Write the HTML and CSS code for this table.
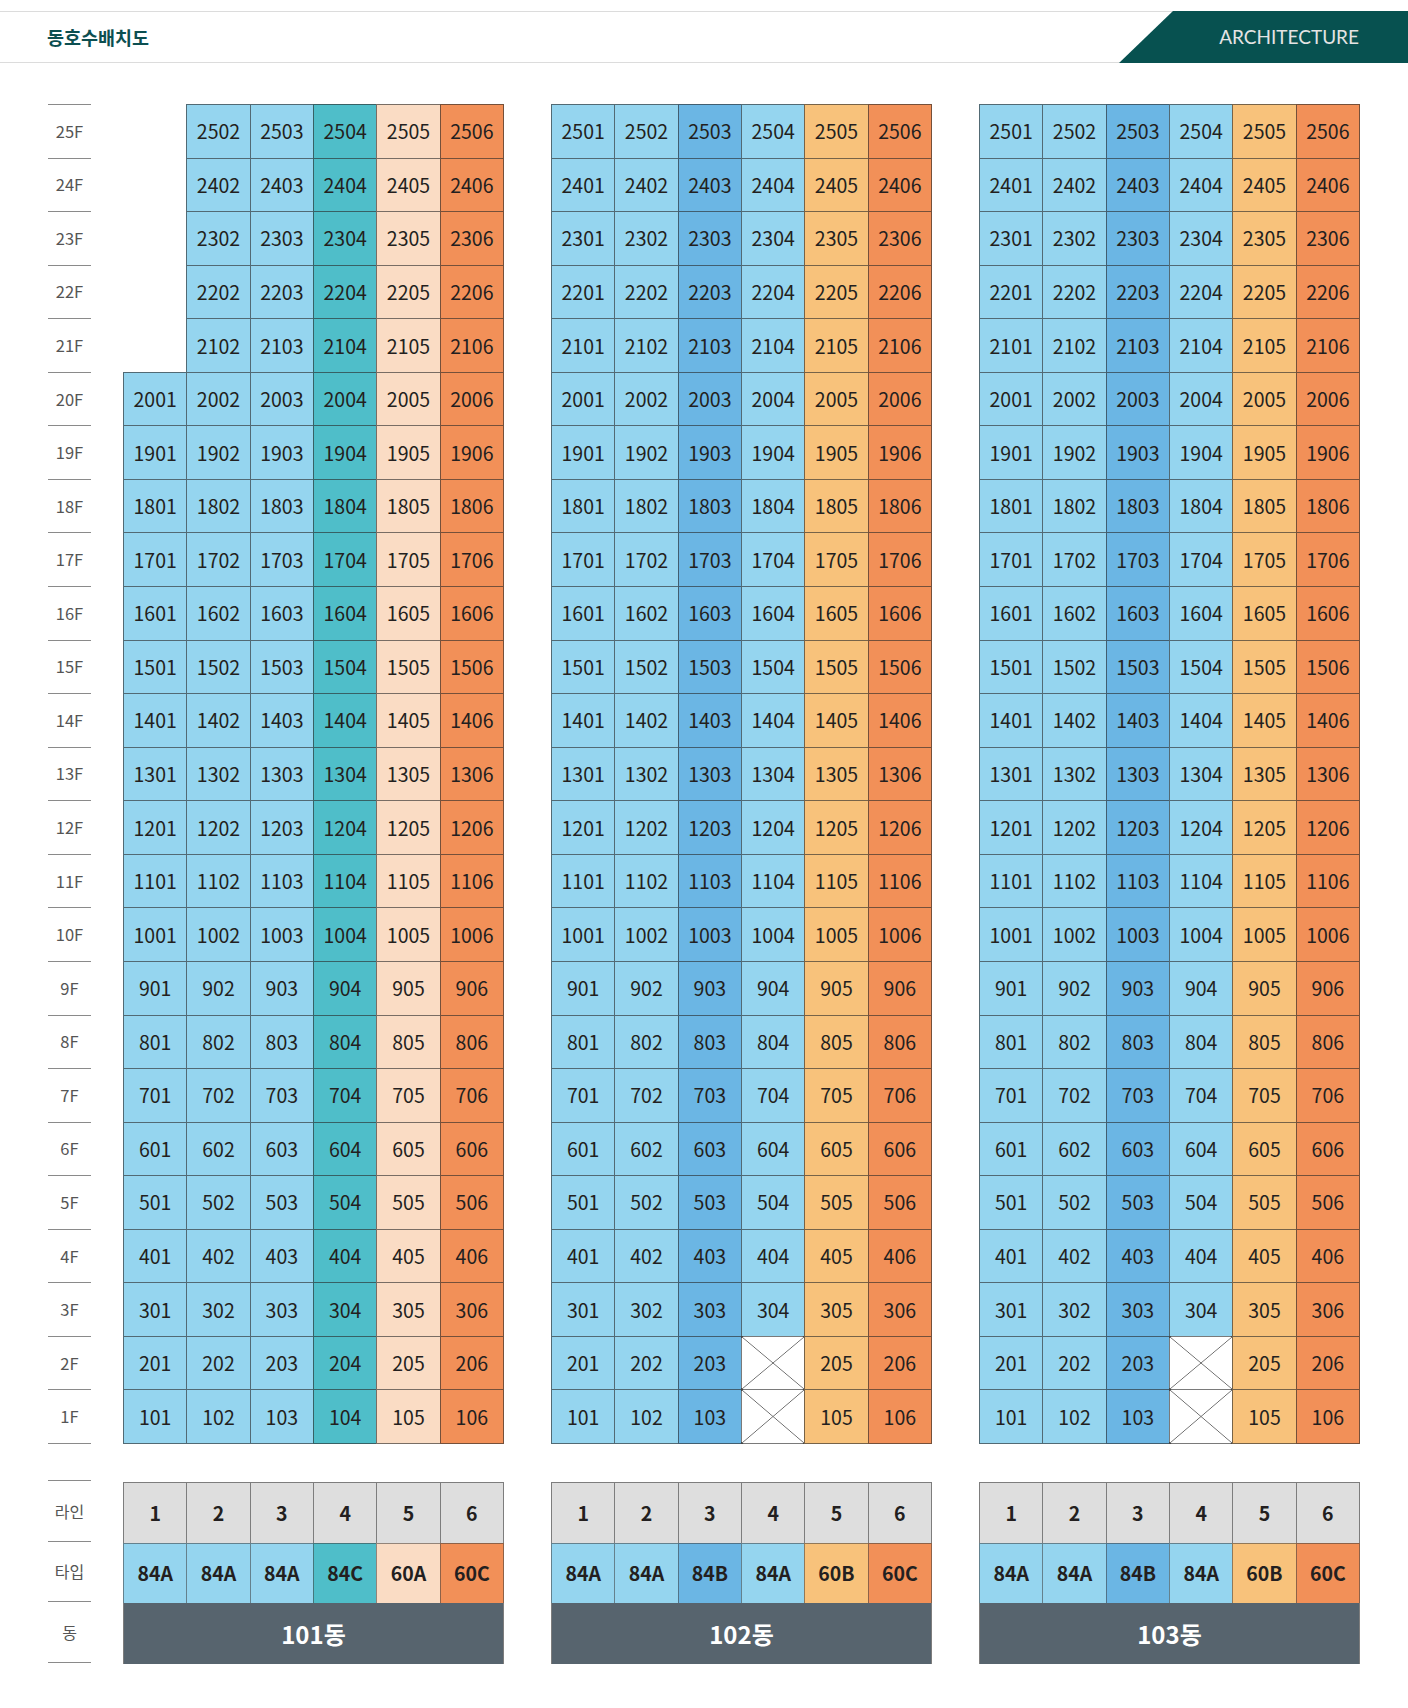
FILE: index.html
```html
<!DOCTYPE html>
<html lang="ko">
<head>
<meta charset="utf-8">
<title>동호수배치도</title>
<link rel="stylesheet" href="styles.css">
</head>
<body>
<header class="topbar">
  <h1 class="title">동호수배치도</h1>
  <div class="banner">ARCHITECTURE</div>
</header>

<main class="chart">
  <div class="floors">
    <div class="fl">25F</div><div class="fl">24F</div><div class="fl">23F</div><div class="fl">22F</div><div class="fl">21F</div>
    <div class="fl">20F</div><div class="fl">19F</div><div class="fl">18F</div><div class="fl">17F</div><div class="fl">16F</div>
    <div class="fl">15F</div><div class="fl">14F</div><div class="fl">13F</div><div class="fl">12F</div><div class="fl">11F</div>
    <div class="fl">10F</div><div class="fl">9F</div><div class="fl">8F</div><div class="fl">7F</div><div class="fl">6F</div>
    <div class="fl">5F</div><div class="fl">4F</div><div class="fl">3F</div><div class="fl">2F</div><div class="fl">1F</div>
  </div>

  <div class="bldgs">
    <div class="bldg b101">
      <div class="none"></div><div class="u">2502</div><div class="u">2503</div><div class="u">2504</div><div class="u">2505</div><div class="u">2506</div>
      <div class="none"></div><div class="u">2402</div><div class="u">2403</div><div class="u">2404</div><div class="u">2405</div><div class="u">2406</div>
      <div class="none"></div><div class="u">2302</div><div class="u">2303</div><div class="u">2304</div><div class="u">2305</div><div class="u">2306</div>
      <div class="none"></div><div class="u">2202</div><div class="u">2203</div><div class="u">2204</div><div class="u">2205</div><div class="u">2206</div>
      <div class="none"></div><div class="u">2102</div><div class="u">2103</div><div class="u">2104</div><div class="u">2105</div><div class="u">2106</div>
      <div class="u">2001</div><div class="u">2002</div><div class="u">2003</div><div class="u">2004</div><div class="u">2005</div><div class="u">2006</div>
      <div class="u">1901</div><div class="u">1902</div><div class="u">1903</div><div class="u">1904</div><div class="u">1905</div><div class="u">1906</div>
      <div class="u">1801</div><div class="u">1802</div><div class="u">1803</div><div class="u">1804</div><div class="u">1805</div><div class="u">1806</div>
      <div class="u">1701</div><div class="u">1702</div><div class="u">1703</div><div class="u">1704</div><div class="u">1705</div><div class="u">1706</div>
      <div class="u">1601</div><div class="u">1602</div><div class="u">1603</div><div class="u">1604</div><div class="u">1605</div><div class="u">1606</div>
      <div class="u">1501</div><div class="u">1502</div><div class="u">1503</div><div class="u">1504</div><div class="u">1505</div><div class="u">1506</div>
      <div class="u">1401</div><div class="u">1402</div><div class="u">1403</div><div class="u">1404</div><div class="u">1405</div><div class="u">1406</div>
      <div class="u">1301</div><div class="u">1302</div><div class="u">1303</div><div class="u">1304</div><div class="u">1305</div><div class="u">1306</div>
      <div class="u">1201</div><div class="u">1202</div><div class="u">1203</div><div class="u">1204</div><div class="u">1205</div><div class="u">1206</div>
      <div class="u">1101</div><div class="u">1102</div><div class="u">1103</div><div class="u">1104</div><div class="u">1105</div><div class="u">1106</div>
      <div class="u">1001</div><div class="u">1002</div><div class="u">1003</div><div class="u">1004</div><div class="u">1005</div><div class="u">1006</div>
      <div class="u">901</div><div class="u">902</div><div class="u">903</div><div class="u">904</div><div class="u">905</div><div class="u">906</div>
      <div class="u">801</div><div class="u">802</div><div class="u">803</div><div class="u">804</div><div class="u">805</div><div class="u">806</div>
      <div class="u">701</div><div class="u">702</div><div class="u">703</div><div class="u">704</div><div class="u">705</div><div class="u">706</div>
      <div class="u">601</div><div class="u">602</div><div class="u">603</div><div class="u">604</div><div class="u">605</div><div class="u">606</div>
      <div class="u">501</div><div class="u">502</div><div class="u">503</div><div class="u">504</div><div class="u">505</div><div class="u">506</div>
      <div class="u">401</div><div class="u">402</div><div class="u">403</div><div class="u">404</div><div class="u">405</div><div class="u">406</div>
      <div class="u">301</div><div class="u">302</div><div class="u">303</div><div class="u">304</div><div class="u">305</div><div class="u">306</div>
      <div class="u">201</div><div class="u">202</div><div class="u">203</div><div class="u">204</div><div class="u">205</div><div class="u">206</div>
      <div class="u">101</div><div class="u">102</div><div class="u">103</div><div class="u">104</div><div class="u">105</div><div class="u">106</div>
    </div>

    <div class="bldg b102">
      <div class="u">2501</div><div class="u">2502</div><div class="u">2503</div><div class="u">2504</div><div class="u">2505</div><div class="u">2506</div>
      <div class="u">2401</div><div class="u">2402</div><div class="u">2403</div><div class="u">2404</div><div class="u">2405</div><div class="u">2406</div>
      <div class="u">2301</div><div class="u">2302</div><div class="u">2303</div><div class="u">2304</div><div class="u">2305</div><div class="u">2306</div>
      <div class="u">2201</div><div class="u">2202</div><div class="u">2203</div><div class="u">2204</div><div class="u">2205</div><div class="u">2206</div>
      <div class="u">2101</div><div class="u">2102</div><div class="u">2103</div><div class="u">2104</div><div class="u">2105</div><div class="u">2106</div>
      <div class="u">2001</div><div class="u">2002</div><div class="u">2003</div><div class="u">2004</div><div class="u">2005</div><div class="u">2006</div>
      <div class="u">1901</div><div class="u">1902</div><div class="u">1903</div><div class="u">1904</div><div class="u">1905</div><div class="u">1906</div>
      <div class="u">1801</div><div class="u">1802</div><div class="u">1803</div><div class="u">1804</div><div class="u">1805</div><div class="u">1806</div>
      <div class="u">1701</div><div class="u">1702</div><div class="u">1703</div><div class="u">1704</div><div class="u">1705</div><div class="u">1706</div>
      <div class="u">1601</div><div class="u">1602</div><div class="u">1603</div><div class="u">1604</div><div class="u">1605</div><div class="u">1606</div>
      <div class="u">1501</div><div class="u">1502</div><div class="u">1503</div><div class="u">1504</div><div class="u">1505</div><div class="u">1506</div>
      <div class="u">1401</div><div class="u">1402</div><div class="u">1403</div><div class="u">1404</div><div class="u">1405</div><div class="u">1406</div>
      <div class="u">1301</div><div class="u">1302</div><div class="u">1303</div><div class="u">1304</div><div class="u">1305</div><div class="u">1306</div>
      <div class="u">1201</div><div class="u">1202</div><div class="u">1203</div><div class="u">1204</div><div class="u">1205</div><div class="u">1206</div>
      <div class="u">1101</div><div class="u">1102</div><div class="u">1103</div><div class="u">1104</div><div class="u">1105</div><div class="u">1106</div>
      <div class="u">1001</div><div class="u">1002</div><div class="u">1003</div><div class="u">1004</div><div class="u">1005</div><div class="u">1006</div>
      <div class="u">901</div><div class="u">902</div><div class="u">903</div><div class="u">904</div><div class="u">905</div><div class="u">906</div>
      <div class="u">801</div><div class="u">802</div><div class="u">803</div><div class="u">804</div><div class="u">805</div><div class="u">806</div>
      <div class="u">701</div><div class="u">702</div><div class="u">703</div><div class="u">704</div><div class="u">705</div><div class="u">706</div>
      <div class="u">601</div><div class="u">602</div><div class="u">603</div><div class="u">604</div><div class="u">605</div><div class="u">606</div>
      <div class="u">501</div><div class="u">502</div><div class="u">503</div><div class="u">504</div><div class="u">505</div><div class="u">506</div>
      <div class="u">401</div><div class="u">402</div><div class="u">403</div><div class="u">404</div><div class="u">405</div><div class="u">406</div>
      <div class="u">301</div><div class="u">302</div><div class="u">303</div><div class="u">304</div><div class="u">305</div><div class="u">306</div>
      <div class="u">201</div><div class="u">202</div><div class="u">203</div><div class="u x"></div><div class="u">205</div><div class="u">206</div>
      <div class="u">101</div><div class="u">102</div><div class="u">103</div><div class="u x"></div><div class="u">105</div><div class="u">106</div>
    </div>

    <div class="bldg b103">
      <div class="u">2501</div><div class="u">2502</div><div class="u">2503</div><div class="u">2504</div><div class="u">2505</div><div class="u">2506</div>
      <div class="u">2401</div><div class="u">2402</div><div class="u">2403</div><div class="u">2404</div><div class="u">2405</div><div class="u">2406</div>
      <div class="u">2301</div><div class="u">2302</div><div class="u">2303</div><div class="u">2304</div><div class="u">2305</div><div class="u">2306</div>
      <div class="u">2201</div><div class="u">2202</div><div class="u">2203</div><div class="u">2204</div><div class="u">2205</div><div class="u">2206</div>
      <div class="u">2101</div><div class="u">2102</div><div class="u">2103</div><div class="u">2104</div><div class="u">2105</div><div class="u">2106</div>
      <div class="u">2001</div><div class="u">2002</div><div class="u">2003</div><div class="u">2004</div><div class="u">2005</div><div class="u">2006</div>
      <div class="u">1901</div><div class="u">1902</div><div class="u">1903</div><div class="u">1904</div><div class="u">1905</div><div class="u">1906</div>
      <div class="u">1801</div><div class="u">1802</div><div class="u">1803</div><div class="u">1804</div><div class="u">1805</div><div class="u">1806</div>
      <div class="u">1701</div><div class="u">1702</div><div class="u">1703</div><div class="u">1704</div><div class="u">1705</div><div class="u">1706</div>
      <div class="u">1601</div><div class="u">1602</div><div class="u">1603</div><div class="u">1604</div><div class="u">1605</div><div class="u">1606</div>
      <div class="u">1501</div><div class="u">1502</div><div class="u">1503</div><div class="u">1504</div><div class="u">1505</div><div class="u">1506</div>
      <div class="u">1401</div><div class="u">1402</div><div class="u">1403</div><div class="u">1404</div><div class="u">1405</div><div class="u">1406</div>
      <div class="u">1301</div><div class="u">1302</div><div class="u">1303</div><div class="u">1304</div><div class="u">1305</div><div class="u">1306</div>
      <div class="u">1201</div><div class="u">1202</div><div class="u">1203</div><div class="u">1204</div><div class="u">1205</div><div class="u">1206</div>
      <div class="u">1101</div><div class="u">1102</div><div class="u">1103</div><div class="u">1104</div><div class="u">1105</div><div class="u">1106</div>
      <div class="u">1001</div><div class="u">1002</div><div class="u">1003</div><div class="u">1004</div><div class="u">1005</div><div class="u">1006</div>
      <div class="u">901</div><div class="u">902</div><div class="u">903</div><div class="u">904</div><div class="u">905</div><div class="u">906</div>
      <div class="u">801</div><div class="u">802</div><div class="u">803</div><div class="u">804</div><div class="u">805</div><div class="u">806</div>
      <div class="u">701</div><div class="u">702</div><div class="u">703</div><div class="u">704</div><div class="u">705</div><div class="u">706</div>
      <div class="u">601</div><div class="u">602</div><div class="u">603</div><div class="u">604</div><div class="u">605</div><div class="u">606</div>
      <div class="u">501</div><div class="u">502</div><div class="u">503</div><div class="u">504</div><div class="u">505</div><div class="u">506</div>
      <div class="u">401</div><div class="u">402</div><div class="u">403</div><div class="u">404</div><div class="u">405</div><div class="u">406</div>
      <div class="u">301</div><div class="u">302</div><div class="u">303</div><div class="u">304</div><div class="u">305</div><div class="u">306</div>
      <div class="u">201</div><div class="u">202</div><div class="u">203</div><div class="u x"></div><div class="u">205</div><div class="u">206</div>
      <div class="u">101</div><div class="u">102</div><div class="u">103</div><div class="u x"></div><div class="u">105</div><div class="u">106</div>
    </div>
  </div>
</main>

<section class="legend">
  <div class="legend-labels">
    <div class="ll">라인</div>
    <div class="ll">타입</div>
    <div class="ll">동</div>
  </div>
  <div class="bldgs">
    <div class="lg b101">
      <div class="ln">1</div><div class="ln">2</div><div class="ln">3</div><div class="ln">4</div><div class="ln">5</div><div class="ln">6</div>
      <div class="u t">84A</div><div class="u t">84A</div><div class="u t">84A</div><div class="u t">84C</div><div class="u t">60A</div><div class="u t">60C</div>
      <div class="dong">101동</div>
    </div>
    <div class="lg b102">
      <div class="ln">1</div><div class="ln">2</div><div class="ln">3</div><div class="ln">4</div><div class="ln">5</div><div class="ln">6</div>
      <div class="u t">84A</div><div class="u t">84A</div><div class="u t">84B</div><div class="u t">84A</div><div class="u t">60B</div><div class="u t">60C</div>
      <div class="dong">102동</div>
    </div>
    <div class="lg b103">
      <div class="ln">1</div><div class="ln">2</div><div class="ln">3</div><div class="ln">4</div><div class="ln">5</div><div class="ln">6</div>
      <div class="u t">84A</div><div class="u t">84A</div><div class="u t">84B</div><div class="u t">84A</div><div class="u t">60B</div><div class="u t">60C</div>
      <div class="dong">103동</div>
    </div>
  </div>
</section>
</body>
</html>
```

FILE: styles.css
```css
* { box-sizing: border-box; }

html, body {
  margin: 0;
  padding: 0;
  background: #fff;
}

body {
  font-family: "Noto Sans CJK KR", "Noto Sans", sans-serif;
  color: #231f20;
  padding-bottom: 40px;
}

/* ---------- header ---------- */
.topbar {
  margin-top: 11px;
  height: 52px;
  border-top: 1px solid #dcdcdc;
  border-bottom: 1px solid #dcdcdc;
  display: flex;
  align-items: center;
  padding-left: 47px;
}

.title {
  margin: 0;
  font-size: 18.5px;
  font-weight: 700;
  color: #0c4f51;
  letter-spacing: 0;
  line-height: 1;
  padding-top: 1px;
}

.banner {
  margin: -1px 0 -1px auto;
  align-self: stretch;
  height: 52px;
  width: 289px;
  background: #075150;
  clip-path: polygon(54px 0, 100% 0, 100% 100%, 0 100%);
  display: flex;
  align-items: center;
  justify-content: flex-end;
  padding-right: 49px;
  font-family: "Lato", "Open Sans", sans-serif;
  font-size: 19px;
  font-weight: 400;
  color: #e4e4e4;
  padding-bottom: 1px;
}

/* ---------- chart ---------- */
.chart {
  display: flex;
  gap: 32px;
  padding-left: 48px;
  margin-top: 41px;
}

.floors {
  width: 43px;
  height: 1340px;
  display: grid;
  grid-template-rows: repeat(25, 1fr);
  border-bottom: 1px solid #8a8a8a;
}

.fl {
  border-top: 1px solid #8a8a8a;
  display: flex;
  align-items: center;
  justify-content: center;
  font-size: 16.5px;
  color: #555;
  padding-bottom: 1px;
}

.bldgs {
  display: flex;
  gap: 48px;
}

.bldg {
  width: 380px;
  height: 1339px;
  display: grid;
  grid-template-columns: repeat(6, 1fr);
  grid-template-rows: repeat(25, 1fr);
}

.u {
  border: 1px solid rgba(40, 40, 40, 0.62);
  margin: 0 -1px -1px 0;
  display: flex;
  align-items: center;
  justify-content: center;
  font-size: 19.5px;
  color: #231f20;
  background: #95d5ef;
  padding-bottom: 1px;
}

.none { background: transparent; }

/* column colours */
.b101 > .u:nth-child(6n+4) { background: #4fbec9; }
.b101 > .u:nth-child(6n+5) { background: #fadcc4; }
.b101 > .u:nth-child(6n) { background: #f29058; }

.b102 > .u:nth-child(6n+3),
.b103 > .u:nth-child(6n+3) { background: #6bb6e4; }
.b102 > .u:nth-child(6n+5),
.b103 > .u:nth-child(6n+5) { background: #f8c27b; }
.b102 > .u:nth-child(6n),
.b103 > .u:nth-child(6n) { background: #f29058; }

.bldg > .u.x {
  background:
    linear-gradient(to top right, transparent calc(50% - 0.7px), #6a6a6a 50%, transparent calc(50% + 0.7px)),
    linear-gradient(to bottom right, transparent calc(50% - 0.7px), #6a6a6a 50%, transparent calc(50% + 0.7px)),
    #fff;
}

/* ---------- legend ---------- */
.legend {
  display: flex;
  gap: 32px;
  padding-left: 48px;
  margin-top: 38px;
}

.legend-labels {
  width: 43px;
  height: 183px;
  margin-top: -2px;
  display: grid;
  grid-template-rows: repeat(3, 1fr);
  border-bottom: 1px solid #8a8a8a;
}

.ll {
  border-top: 1px solid #8a8a8a;
  display: flex;
  align-items: center;
  justify-content: center;
  font-size: 16px;
  color: #555;
}

.lg {
  width: 380px;
  height: 182px;
  display: grid;
  grid-template-columns: repeat(6, 1fr);
  grid-template-rows: repeat(3, 1fr);
}

.ln {
  border: 1px solid #7d7d7d;
  margin: 0 -1px -1px 0;
  background: #dedede;
  display: flex;
  align-items: center;
  justify-content: center;
  font-size: 19.5px;
  font-weight: 700;
  color: #231f20;
}

.lg > .u.t {
  font-weight: 700;
  border-color: rgba(60, 60, 60, 0.55);
}

.b101 > .u.t:nth-child(6n+1), .b101 > .u.t:nth-child(6n+2), .b101 > .u.t:nth-child(6n+3) { background: #95d5ef; }

.dong {
  grid-column: 1 / -1;
  background: #57646e;
  border: 1px solid #7d7d7d;
  border-top: none;
  border-bottom: none;
  margin-right: -1px;
  color: #fff;
  font-size: 24px;
  font-weight: 700;
  display: flex;
  align-items: center;
  justify-content: center;
}
```
